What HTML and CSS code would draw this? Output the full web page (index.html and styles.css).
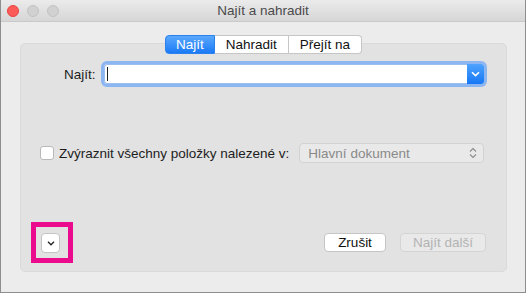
FILE: index.html
```html
<!DOCTYPE html>
<html lang="cs">
  <head>
    <meta charset="utf-8">
    <title>Najít a nahradit</title>
    <link rel="stylesheet" href="styles.css">
  </head>
  <body>
    <div class="window">

      <!-- title bar -->
      <div class="titlebar">
        <div class="lights">
          <span class="light red"></span>
          <span class="light"></span>
          <span class="light"></span>
        </div>
        <div class="title">Najít a nahradit</div>
      </div>

      <div class="content">
        <div class="tabs">
          <span class="tab active">Najít</span>
          <span class="tab">Nahradit</span>
          <span class="tab">Přejít na</span>
        </div>

        <div class="panel">
          <div class="findRow">
            <label class="findLabel" for="findInput">Najít:</label>
            <div class="combo">
              <div class="comboField" id="findInput"><span class="caret"></span></div>
              <div class="comboBtn">
                <svg width="9" height="6" viewBox="0 0 9 6"><path d="M1 1.2 L4.5 4.6 L8 1.2" fill="none" stroke="#fff" stroke-width="1.6"/></svg>
              </div>
            </div>
          </div>

          <div class="highlightRow">
            <span class="checkbox"></span>
            <span class="checkText">Zvýraznit všechny položky nalezené v:</span>
            <div class="popup">
              <span>Hlavní dokument</span>
              <svg width="8" height="12" viewBox="0 0 8 12"><path d="M1 4.5 L4 1.5 L7 4.5 M1 7.5 L4 10.5 L7 7.5" fill="none" stroke="#8c8c8c" stroke-width="1.1"/></svg>
            </div>
          </div>

          <div class="buttonRow">
            <div class="highlightFrame">
              <div class="disclosure">
                <svg width="8" height="5" viewBox="0 0 8 5"><path d="M1 0.8 L4 3.8 L7 0.8" fill="none" stroke="#222" stroke-width="1.3"/></svg>
              </div>
            </div>
            <div class="spacer"></div>
            <button class="btn">Zrušit</button>
            <button class="btn disabled">Najít další</button>
          </div>
        </div>
      </div>
    </div>
  </body>
</html>
```

FILE: styles.css
```css
body {
  margin: 0;
  background-color: #ececec;
  font-family: "Liberation Sans", Arial, sans-serif;
  font-size: 13.5px;
  color: #1d1d1d;
}

.window {
  width: 526px;
  height: 293px;
  box-sizing: border-box;
  border: 1px solid #8e8e8e;
  border-top: none;
  background-color: #ececec;
  display: flex;
  flex-direction: column;
}

/* title bar */

.titlebar {
  height: 22px;
  box-sizing: border-box;
  background: linear-gradient(#ebebeb, #d6d6d6);
  border-bottom: 1px solid #c9c9c9;
  display: flex;
  align-items: center;
  position: relative;
}

.lights {
  display: flex;
  gap: 8px;
  margin-left: 6px;
}

.light {
  width: 12px;
  height: 12px;
  border-radius: 50%;
  box-sizing: border-box;
  background-color: #d1d1d1;
  border: 1px solid #c2c2c2;
}

.light.red {
  background-color: #fc5b57;
  border-color: #e5453f;
}

.title {
  position: absolute;
  left: 0;
  right: 0;
  text-align: center;
  color: #4b4b4b;
  font-size: 13.5px;
}

/* content */

.content {
  flex: 1;
  padding: 13px 18px 20px 19px;
  display: flex;
  flex-direction: column;
}

.tabs {
  display: flex;
  justify-content: center;
  position: relative;
  z-index: 1;
  height: 19px;
}

.tab {
  display: flex;
  align-items: center;
  padding: 0 11px;
  background-color: #fff;
  border: 1px solid #c6c6c6;
  border-left: none;
  box-sizing: border-box;
  color: #111;
}

.tab:last-child {
  border-radius: 0 4px 4px 0;
}

.tab.active {
  background: linear-gradient(#5aa8fd, #1a7af6);
  border: 1px solid #2d81ee;
  color: #fff;
  border-radius: 4px 0 0 4px;
  padding: 0 10px;
}

.panel {
  margin-top: -11px;
  height: 229px;
  box-sizing: border-box;
  background-color: #e2e2e2;
  border: 1px solid #dadada;
  border-radius: 5px;
  padding: 20px 20px 8px 0;
  display: flex;
  flex-direction: column;
}

.findRow {
  display: flex;
  align-items: center;
  height: 20px;
}

.findLabel {
  margin-left: 43px;
  margin-right: 8px;
}

.combo {
  display: flex;
  width: 380px;
  height: 20px;
  border-radius: 3px;
  box-shadow: 0 0 0 3px #8cb6f1;
}

.comboField {
  flex: 1;
  background-color: #fff;
  border: 1px solid #9ebfee;
  border-right: none;
  border-radius: 3px 0 0 3px;
  display: flex;
  align-items: center;
  padding-left: 2px;
}

.caret {
  width: 1px;
  height: 14px;
  background-color: #222;
}

.comboBtn {
  width: 17px;
  background: linear-gradient(#4ea3fd, #1677f5);
  border-radius: 0 3px 3px 0;
  display: flex;
  align-items: center;
  justify-content: center;
}

.highlightRow {
  margin-top: 59px;
  height: 20px;
  display: flex;
  align-items: center;
}

.checkbox {
  width: 14px;
  height: 14px;
  box-sizing: border-box;
  margin-left: 19px;
  background-color: #fff;
  border: 1px solid #b9b9b9;
  border-radius: 3px;
}

.checkText {
  margin-left: 5px;
}

.popup {
  margin-left: 10px;
  width: 185px;
  height: 20px;
  box-sizing: border-box;
  background-color: #e9e9e9;
  border: 1px solid #d2d2d2;
  border-radius: 4px;
  display: flex;
  align-items: center;
  justify-content: space-between;
  padding: 0 6px 0 8px;
  color: #8a8a8a;
}

.buttonRow {
  margin-top: 59px;
  height: 41px;
  display: flex;
  align-items: center;
}

.highlightFrame {
  margin-left: 10px;
  width: 42px;
  height: 41px;
  box-sizing: border-box;
  border: 5px solid #ea0c8c;
  padding: 6px 0 0 5px;
}

.disclosure {
  width: 19px;
  height: 20px;
  box-sizing: border-box;
  background-color: #fff;
  border: 1px solid #c4c4c4;
  border-radius: 4px;
  display: flex;
  align-items: center;
  justify-content: center;
}

.spacer {
  flex: 1;
}

.btn {
  height: 19px;
  box-sizing: border-box;
  font-family: inherit;
  font-size: 13.5px;
  color: #111;
  background-color: #fff;
  border: 1px solid #c5c5c5;
  border-radius: 4px;
  padding: 0;
  width: 62px;
}

.btn.disabled {
  margin-left: 14px;
  width: 86px;
  color: #b3b3b3;
  background-color: #e9e9e9;
  border-color: #d4d4d4;
}
```
